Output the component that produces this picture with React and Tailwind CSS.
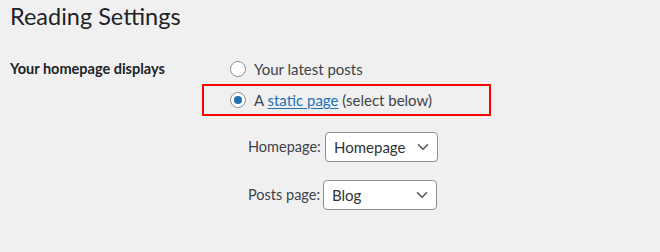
import React from "react";

const Chevron = () => (
  <svg width="12" height="8" viewBox="0 0 12 8" fill="none" className="shrink-0">
    <path d="M1.5 1.8L6 6.2l4.5-4.4" stroke="#50575e" strokeWidth="1.6" strokeLinecap="round" strokeLinejoin="round" />
  </svg>
);

const Radio = ({ checked }) => (
  <span className="w-[16px] h-[16px] rounded-full border border-[#8c8f94] bg-white flex items-center justify-center shrink-0">
    {checked && <span className="w-[8px] h-[8px] rounded-full bg-[#2271b1]" />}
  </span>
);

const Select = ({ value, width }) => (
  <div className={`${width} h-[30px] bg-white border border-[#8c8f94] rounded-[4px] flex items-center justify-between pl-[8px] pr-[8px] text-[15px] text-[#2c3338]`}>
    <span>{value}</span>
    <Chevron />
  </div>
);

const App = () => {
  return (
    <div className="w-[660px] h-[252px] bg-[#f0f0f1] overflow-hidden text-[#1d2327]" style={{ fontFamily: 'Lato, "Noto Sans", sans-serif' }}>
      <h1 className="text-[23.5px] leading-[29px] font-normal ml-[10px] pt-[2px]">Reading Settings</h1>
      <div className="flex mt-[28px]">
        <div className="w-[230px] pl-[10px] h-[20px] flex items-center text-[14.5px] font-bold">Your homepage displays</div>
        <div className="flex flex-col">
          <label className="h-[20px] flex items-center gap-[8px] text-[15px] text-[#3c434a]">
            <Radio />
            <span>Your latest posts</span>
          </label>
          <div className="mt-[5px] -ml-[28px] w-[289px] h-[32px] border-2 border-[#ff0000] flex items-center pl-[26px] gap-[8px] text-[15px] text-[#3c434a]">
            <Radio checked />
            <span>
              A <a className="text-[#2271b1] underline underline-offset-2">static page</a> (select below)
            </span>
          </div>
          <div className="mt-[16px] ml-[18px] flex items-center text-[14.5px] text-[#3c434a]">
            <span className="w-[77px] whitespace-nowrap">Homepage:</span>
            <Select value="Homepage" width="w-[113px]" />
          </div>
          <div className="mt-[18px] ml-[18px] flex items-center text-[14.5px] text-[#3c434a]">
            <span className="w-[75px] whitespace-nowrap">Posts page:</span>
            <Select value="Blog" width="w-[114px]" />
          </div>
        </div>
      </div>
    </div>
  );
};

export default App;
